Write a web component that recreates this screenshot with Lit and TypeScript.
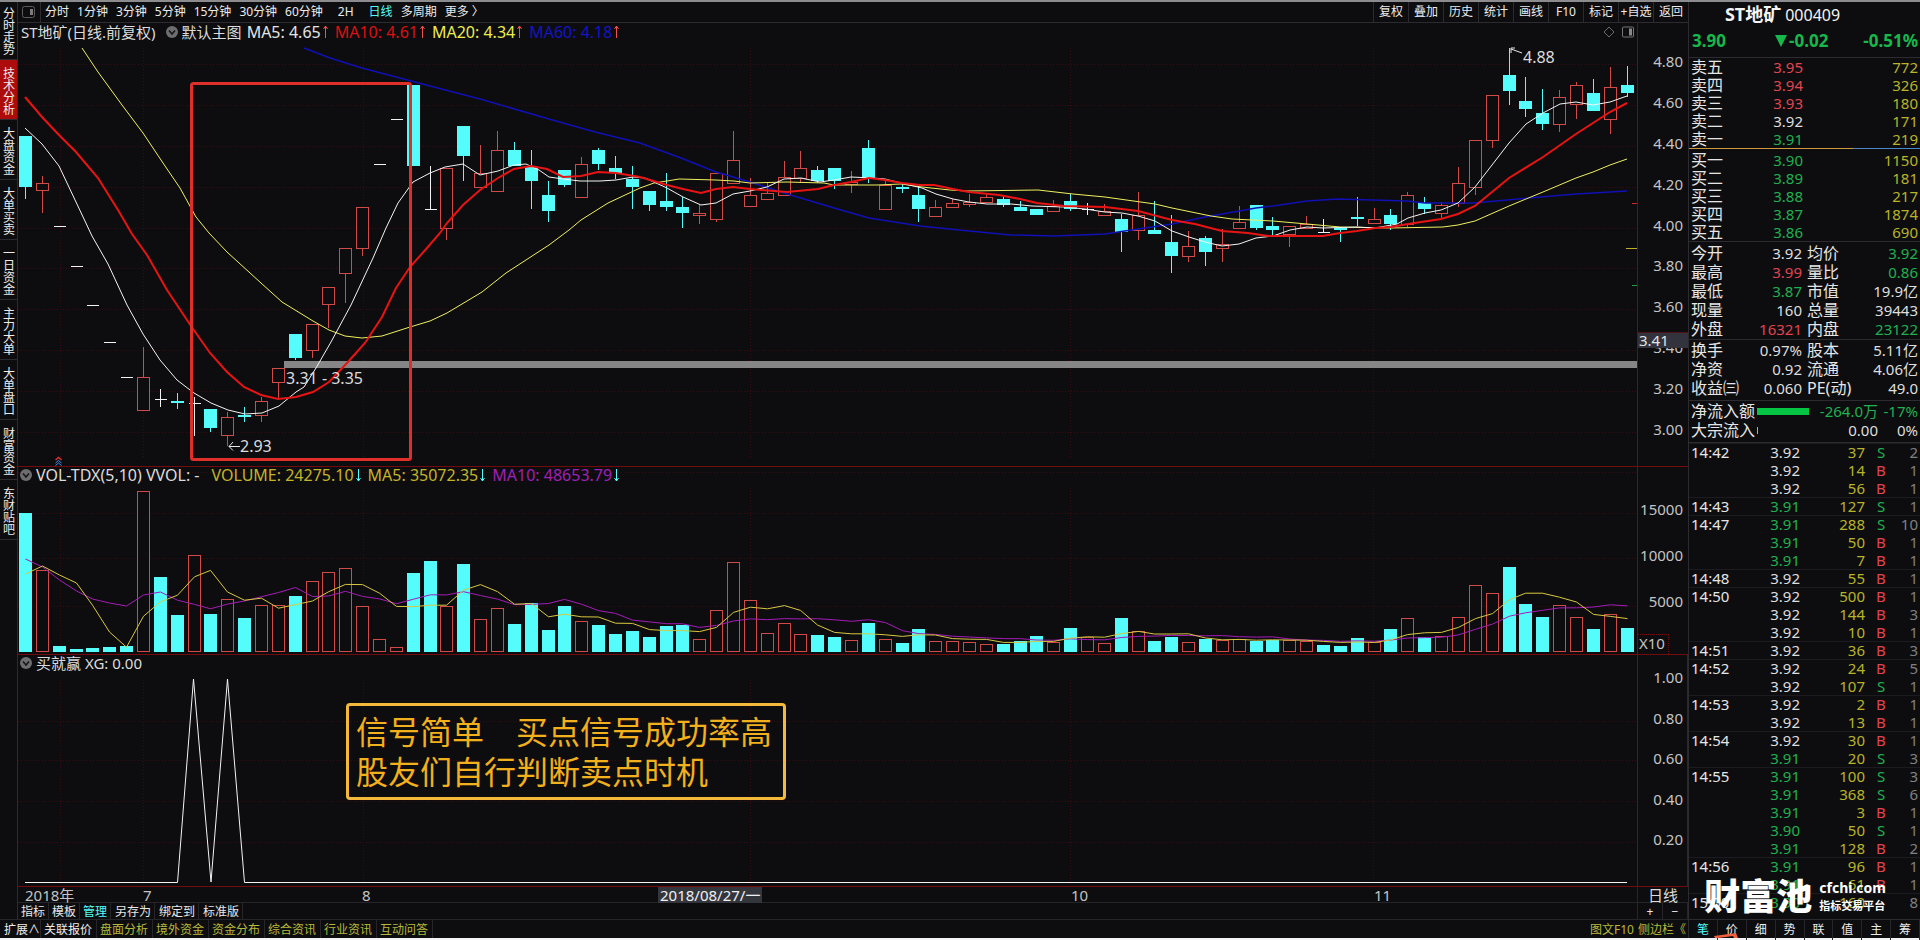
import { LitElement, html, svg, css, nothing } from "lit";
import { customElement, property } from "lit/decorators.js";
import { classMap } from "lit/directives/class-map.js";
import { styleMap } from "lit/directives/style-map.js";

// Plot geometry shared by the three panes.
const X0 = 18;
const PLOT_W = 1619;
const FIRST = 25.5;
const STEP = 16.858;
const PRICE_TOP = 23;
const PRICE_H = 443;
const VOL_TOP = 467;
const VOL_H = 187;
const VOL_BASE = 652;
const SIG_TOP = 655;
const SIG_H = 231;
const cx = (i: number) => Math.round(FIRST + i * STEP - 0.5) + 0.5;

type Kind = "c" | "r" | "w";
// kind, body top, body bottom, high, low
type Candle = [Kind, number, number, number, number];

const CANDLES: Candle[] = [
  ["c", 136, 187, 136, 199], ["r", 183, 190, 176, 213], ["w", 226, 226, 226, 226], ["w", 266, 266, 266, 266],
  ["w", 305, 305, 305, 305], ["w", 342, 342, 342, 342], ["w", 377, 377, 377, 377], ["r", 377, 410, 347, 410],
  ["w", 399, 399, 389, 407], ["c", 401, 403, 393, 409], ["w", 403, 403, 397, 436], ["c", 409, 428, 409, 432],
  ["r", 417, 435, 412, 446], ["c", 415, 417, 407, 422], ["r", 401, 415, 397, 422], ["r", 368, 382, 368, 400],
  ["c", 334, 358, 334, 360], ["r", 324, 350, 324, 358], ["r", 287, 304, 287, 328], ["r", 248, 273, 248, 303],
  ["r", 207, 248, 207, 256], ["w", 164, 164, 164, 164], ["w", 119, 119, 119, 119], ["c", 85, 166, 85, 166],
  ["w", 209, 209, 166, 209], ["r", 168, 228, 168, 240], ["c", 126, 156, 126, 181], ["r", 173, 187, 145, 187],
  ["r", 150, 191, 131, 191], ["c", 150, 166, 142, 166], ["c", 167, 181, 150, 209], ["c", 195, 211, 181, 222],
  ["c", 170, 185, 170, 187], ["r", 164, 197, 157, 197], ["c", 150, 164, 148, 170], ["c", 168, 173, 156, 179],
  ["c", 179, 187, 166, 209], ["c", 191, 205, 191, 211], ["c", 201, 207, 173, 211], ["c", 207, 213, 197, 228],
  ["r", 213, 215, 205, 224], ["r", 173, 219, 173, 222], ["r", 160, 183, 131, 183], ["r", 195, 206, 178, 206],
  ["r", 193, 199, 183, 199], ["r", 177, 195, 161, 195], ["r", 168, 178, 151, 183], ["c", 170, 181, 166, 183],
  ["c", 168, 181, 168, 189], ["r", 182, 184, 171, 193], ["c", 148, 178, 140, 183], ["r", 185, 209, 179, 209],
  ["c", 187, 189, 184, 193], ["c", 195, 209, 187, 222], ["r", 207, 216, 200, 216], ["r", 203, 207, 199, 207],
  ["r", 202, 204, 194, 207], ["r", 197, 202, 194, 202], ["c", 199, 205, 197, 207], ["c", 207, 211, 201, 211],
  ["c", 209, 215, 209, 215], ["r", 206, 211, 200, 211], ["c", 201, 209, 194, 211], ["w", 209, 209, 203, 215],
  ["r", 211, 215, 204, 215], ["c", 219, 232, 214, 252], ["r", 215, 230, 192, 240], ["c", 230, 234, 201, 234],
  ["c", 242, 256, 215, 273], ["r", 246, 256, 231, 262], ["c", 238, 252, 236, 266], ["r", 244, 248, 229, 262],
  ["r", 222, 228, 206, 228], ["c", 205, 228, 205, 230], ["c", 226, 230, 217, 237], ["r", 226, 234, 226, 247],
  ["r", 224, 228, 216, 228], ["w", 232, 232, 219, 233], ["c", 228, 230, 228, 242], ["c", 217, 219, 197, 226],
  ["r", 219, 223, 208, 223], ["c", 215, 224, 209, 230], ["r", 195, 224, 192, 227], ["c", 203, 209, 197, 214],
  ["r", 205, 213, 202, 218], ["r", 183, 203, 167, 207], ["r", 140, 187, 140, 195], ["r", 95, 140, 95, 148],
  ["c", 75, 91, 48, 105], ["c", 101, 109, 77, 117], ["c", 113, 124, 89, 130], ["r", 97, 124, 90, 132],
  ["r", 85, 104, 82, 119], ["c", 93, 111, 79, 111], ["r", 87, 119, 67, 134], ["c", 85, 93, 66, 97],
];

// Top edge of each volume bar; the bar stands on VOL_BASE.
const VOLUMES: number[] = [
  513, 570, 646, 649, 648, 647, 646, 491, 577, 615, 555, 614, 599, 618, 605, 605, 596, 581, 572, 568,
  606, 639, 647, 573, 561, 606, 564, 619, 608, 624, 603, 630, 606, 621, 625, 634, 631, 637, 626, 625,
  639, 610, 562, 600, 633, 623, 634, 635, 637, 640, 623, 639, 643, 629, 641, 641, 642, 644, 644, 641,
  636, 642, 628, 637, 643, 618, 631, 641, 637, 642, 639, 640, 639, 641, 640, 640, 641, 645, 646, 638,
  642, 629, 618, 637, 636, 617, 585, 593, 567, 604, 617, 605, 617, 629, 614, 628,
];
// Flat sessions whose volume bar is drawn solid.
const SOLID_FLAT = new Set([2, 3, 4, 5, 6, 8, 24, 77]);
const volumeIsCyan = (i: number) => SOLID_FLAT.has(i) || CANDLES[i][0] === "c";

const average = (n: number, head: number[]) =>
  VOLUMES.map((_, i) => {
    const y = i < head.length ? head[i] : VOLUMES.slice(i - n + 1, i + 1).reduce((a, b) => a + b, 0) / n;
    return `${cx(i)},${y.toFixed(1)}`;
  }).join(" ");
const VOL_MA5 = average(5, [574, 566, 575, 583]);
const VOL_MA10 = average(10, [559, 567, 580, 591, 599, 603, 606, 595, 592]);

const MA5 =
  "25,128 42,144 59,166 76,202 92,236 108,264 127,305 143,334 160,360 177,380 194,393 211,403 228,410 245,414 262,413 279,406 296,392 304,387 316,368 331,342 351,305 373,258 386,228 398,203 413,182 430,173 445,167 463,164 480,175 498,171 514,165 526,164 539,170 549,177 563,179 580,181 600,181 616,180 633,177 645,178 656,183 667,188 683,197 701,205 716,203 733,194 750,191 767,187 784,179 801,178 820,182 834,180 851,177 873,178 885,179 905,184 922,188 936,194 953,199 969,202 987,204 1011,204 1032,206 1064,207 1085,209 1105,212 1122,213 1138,216 1155,221 1172,231 1189,237 1205,242 1222,246 1239,244 1256,238 1273,236 1290,230 1307,227 1323,228 1357,227 1375,228 1397,224 1408,218 1425,213 1441,210 1458,203 1475,187 1492,165 1509,143 1526,124 1543,113 1560,104 1576,102 1593,105 1610,102 1627,96";
const MA10 =
  "25,97 42,117 59,135 76,152 98,178 118,210 132,234 147,255 167,290 191,326 210,353 227,372 244,387 261,395 278,399 296,397 313,392 329,382 347,363 365,343 382,317 396,288 410,267 427,248 440,233 447,223 463,205 480,190 498,178 514,169 531,166 547,169 563,177 581,176 598,172 616,173 640,177 667,185 683,189 701,193 716,189 733,187 750,189 787,192 818,189 834,185 851,182 869,178 885,180 902,183 920,185 934,185 953,189 969,192 999,195 1020,199 1037,203 1064,206 1105,207 1138,211 1172,220 1195,224 1222,231 1248,233 1268,236 1323,236 1340,233 1357,231 1375,228 1391,227 1408,224 1441,219 1458,214 1475,206 1492,192 1509,178 1543,157 1576,134 1610,112 1627,103";
const MA20 =
  "82,48 98,72 122,105 143,133 163,163 180,188 196,217 209,233 227,252 261,283 282,302 313,321 329,330 345,336 362,338 382,336 410,327 430,321 447,313 482,292 506,273 549,245 569,230 581,220 608,203 640,188 654,183 667,181 679,179 716,180 734,181 750,183 787,182 824,183 834,185 877,185 901,184 922,187 950,190 967,191 1038,190 1073,194 1105,197 1155,204 1172,208 1211,216 1232,219 1273,221 1307,224 1340,227 1390,228 1443,227 1458,225 1475,221 1509,206 1543,192 1576,178 1593,172 1610,165 1627,159";
const MA60 =
  "304,48 330,58 362,68 430,86 480,99 549,119 595,132 640,143 681,158 716,172 750,182 784,193 834,208 869,218 920,226 969,231 1011,235 1054,236 1105,234 1138,229 1172,224 1205,217 1256,208 1273,206 1307,201 1337,199 1373,200 1407,201 1425,203 1473,203 1507,200 1540,197 1576,194 1627,191";

const MONTH_LINES = [60, 143, 363, 750, 1070, 1373];

const left = (x: number) => `${((x - X0) / PLOT_W) * 100}%`;
const top = (y: number, from: number, h: number) => `${((y - from) / h) * 100}%`;

const sharedText = css`
  :host {
    font-family: "Noto Sans", "Noto Sans CJK SC", sans-serif;
  }
  button,
  a {
    appearance: none;
    margin: 0;
    padding: 0;
    border: 0;
    background: none;
    color: inherit;
    font: inherit;
    line-height: inherit;
    text-decoration: none;
    white-space: nowrap;
    cursor: pointer;
  }
`;

const grid = (ys: number[], y0: number, y1: number) => svg`
  ${ys.map((y) => svg`<line class="grid" x1="18" x2="1637" y1=${y + 0.5} y2=${y + 0.5}></line>`)}
  ${MONTH_LINES.map((x) => svg`<line class="grid" x1=${x + 0.5} x2=${x + 0.5} y1=${y0} y2=${y1}></line>`)}
`;

const collapse = html`<button class="collapse" aria-label="展开">
  <svg viewBox="0 0 12 12" width="12" height="12">
    <circle cx="6" cy="6" r="6" fill="#6d6d6d"></circle>
    <path d="M3 4.5 6 8l3-3.5" fill="none" stroke="#17171a" stroke-width="1.6"></path>
  </svg>
</button>`;

const arrow = (dir: "up" | "down") => html`<svg class="arrow ${dir}" viewBox="0 0 5 13" width="5" height="13">
  ${dir === "up"
    ? svg`<path d="M2.5 13V1M0.5 4 2.5 1l2 3" ></path>`
    : svg`<path d="M2.5 0v12M0.5 9l2 3 2-3"></path>`}
</svg>`;

@customElement("stock-charts")
class StockCharts extends LitElement {
  static styles = [
    sharedText,
    css`
      :host {
        display: flex;
        flex-direction: column;
        flex: 1;
        min-width: 0;
        font-size: 15px;
        line-height: 20px;
        color: #c4c4c4;
      }
      .pane {
        display: grid;
        grid-template-columns: minmax(0, 1fr) 51px;
        border-bottom: 1px solid #720a0e;
      }
      .price {
        flex: 443 0 443px;
      }
      .volume {
        flex: 187 0 187px;
      }
      .signal {
        flex: 231 0 231px;
      }
      .plot {
        position: relative;
        display: flex;
        flex-direction: column;
        min-width: 0;
      }
      .canvas {
        position: absolute;
        inset: 0;
        width: 100%;
        height: 100%;
      }
      .grid {
        stroke: #3a0b10;
        stroke-dasharray: 1 2;
      }
      .cyan {
        fill: #54fcfc;
        stroke: none;
      }
      .cyanline {
        stroke: #54fcfc;
      }
      .red {
        fill: #0d0d0f;
        stroke: #d04a48;
      }
      .redline {
        stroke: #d04a48;
      }
      .white {
        stroke: #f2f2f2;
      }
      .line {
        fill: none;
        stroke-width: 1;
      }
      .ma5 {
        stroke: #f4f4f4;
      }
      .ma10 {
        stroke: #e81414;
        stroke-width: 2;
      }
      .ma20 {
        stroke: #f0f060;
      }
      .ma60 {
        stroke: #1010b4;
        stroke-width: 1.5;
      }
      .vma5 {
        stroke: #d8c840;
      }
      .vma10 {
        stroke: #a41cb8;
      }
      .heading {
        position: relative;
        display: flex;
        align-items: center;
        height: 16px;
        padding-left: 2px;
        font-size: 16px;
        white-space: nowrap;
        color: #dcdcdc;
      }
      .price .heading {
        height: 17px;
        padding-left: 3px;
      }
      .collapse {
        display: flex;
        margin-right: 4px;
      }
      .price .collapse {
        margin-left: 10px;
      }
      .series {
        display: flex;
        align-items: center;
        gap: 2px;
        margin-right: 7px;
      }
      .name {
        margin-right: 12px;
      }
      .title,
      .main {
        font-size: 15px;
      }
      .main {
        margin-right: 5px;
      }
      .arrow {
        fill: none;
      }
      .up {
        stroke: #f05050;
      }
      .down {
        stroke: #54fcfc;
      }
      .s5 {
        color: #e4e4e4;
      }
      .s10 {
        color: #dc1010;
      }
      .s20 {
        color: #ecec50;
      }
      .s60 {
        color: #1414c8;
      }
      .v5 {
        color: #c4b428;
      }
      .v10 {
        color: #a020b8;
      }
      .tools {
        display: flex;
        gap: 7px;
        margin-left: auto;
        padding-right: 3px;
      }
      .tools button {
        display: flex;
      }
      .note {
        position: absolute;
        color: #dcdcdc;
        font-size: 16px;
        white-space: nowrap;
      }
      .callout {
        position: absolute;
        padding: 4px 11px 7px 7px;
        border: 3px solid #f4b93a;
        border-radius: 4px;
        color: #f2b01c;
        font-size: 32px;
        line-height: 40px;
        font-family: "Noto Sans CJK SC", sans-serif;
        white-space: pre;
      }
      .scale {
        position: relative;
        display: flex;
        flex-direction: column;
        justify-content: space-between;
        border-left: 1px solid #720a0e;
        padding-right: 5px;
        text-align: right;
      }
      .price .scale {
        padding-top: 28px;
        padding-bottom: 27px;
      }
      .volume .scale {
        padding-top: 32px;
        justify-content: flex-start;
      }
      .volume .scale span + span:not(.unit) {
        margin-top: 26px;
      }
      .signal .scale {
        padding-top: 12px;
        padding-bottom: 37px;
        border-right: 1px solid #720a0e;
        padding-right: 4px;
      }
      .volume .scale .unit {
        align-self: flex-start;
        margin-top: auto;
        padding: 0 3px 3px 1px;
        border-top: 1px dotted #720a0e;
        border-right: 1px dotted #720a0e;
        line-height: 16px;
      }
      .cursor {
        position: absolute;
        left: 0;
        right: 0;
        padding-left: 1px;
        border-top: 1px solid #501418;
        background: #33333d;
        color: #e4e4e4;
        text-align: left;
        line-height: 15px;
      }
      .dates {
        display: grid;
        grid-template-columns: minmax(0, 1fr) 51px;
        flex: none;
        height: 15px;
        line-height: 16px;
        border-bottom: 1px solid #26262a;
      }
      .track {
        position: relative;
      }
      .date {
        position: absolute;
        line-height: 16px;
      }
      .picked {
        padding: 0 2px;
        background: #34363e;
        color: #f0f0f0;
      }
      .period {
        text-align: center;
        border-left: 1px solid #26262a;
        color: #dcdcdc;
      }
      .tabs {
        display: flex;
        flex: none;
        height: 16px;
        line-height: 17px;
        font-size: 12px;
        color: #e8e8e8;
        border-bottom: 1px solid #26262a;
      }
      .tabs button {
        padding: 0 3px;
        border-right: 1px solid #26262a;
      }
      .tabs .on {
        color: #54fcfc;
      }
      .tabs .wide {
        padding: 0 3px 0 4px;
      }
      .zoom {
        display: grid;
        grid-template-columns: 1fr 1fr;
        width: 50px;
        margin-left: auto;
        border-left: 1px solid #26262a;
      }
      @media (max-width: 1100px) {
        .series:nth-child(n + 5) {
          display: none;
        }
      }
    `,
  ];

  private candle([kind, t, b, hi, lo]: Candle, i: number) {
    const x = cx(i);
    if (kind === "w")
      return svg`<g class="white" shape-rendering="crispEdges">
        <line x1=${x - 6} x2=${x + 6} y1=${t + 0.5} y2=${t + 0.5}></line>
        ${hi !== lo ? svg`<line x1=${x} x2=${x} y1=${hi} y2=${lo}></line>` : nothing}
      </g>`;
    if (kind === "c")
      return svg`<g shape-rendering="crispEdges">
        <line class="cyanline" x1=${x} x2=${x} y1=${hi} y2=${lo}></line>
        <rect class="cyan" x=${x - 6.5} y=${t} width="13" height=${b - t}></rect>
      </g>`;
    return svg`<g shape-rendering="crispEdges">
      <line class="redline" x1=${x} x2=${x} y1=${hi} y2=${lo}></line>
      <rect class="red" x=${x - 6} y=${t + 0.5} width="12" height=${b - t}></rect>
    </g>`;
  }

  private bar(t: number, i: number) {
    const x = cx(i);
    return volumeIsCyan(i)
      ? svg`<rect class="cyan" shape-rendering="crispEdges" x=${x - 6.5} y=${t} width="13" height=${VOL_BASE - t}></rect>`
      : svg`<rect class="red" shape-rendering="crispEdges" x=${x - 6} y=${t + 0.5} width="12" height=${VOL_BASE - 1 - t}></rect>`;
  }

  private series(cls: string, text: string, dir: "up" | "down") {
    return html`<span class="series ${cls}">${text}${arrow(dir)}</span>`;
  }

  private note(text: string, x: number, y: number) {
    return html`<span class="note" style=${styleMap({ left: left(x), top: top(y, PRICE_TOP, PRICE_H) })}>${text}</span>`;
  }

  render() {
    return html`
      <section class="pane price">
        <div class="plot">
          <svg class="canvas" viewBox="${X0} ${PRICE_TOP} ${PLOT_W} ${PRICE_H}" preserveAspectRatio="none">
            ${grid([64, 105, 146, 187, 228, 268, 309, 350, 391, 432], 48, 457)}
            <rect x="284" y="361" width="1353" height="7" fill="#868686"></rect>
            ${CANDLES.map((c, i) => this.candle(c, i))}
            <polyline class="line ma60" points=${MA60}></polyline>
            <polyline class="line ma20" points=${MA20}></polyline>
            <polyline class="line ma5" points=${MA5}></polyline>
            <polyline class="line ma10" points=${MA10}></polyline>
            <rect x="191.5" y="83.5" width="219" height="376" rx="2" fill="none" stroke="#de2f28" stroke-width="3"></rect>
            <path d="M240 446.500H229M233 442l-4 4.500 4 4M1522 53l-11-4M1511 53v-5h4" fill="none" stroke="#e8e8e8"></path>
            <path d="M55.500 460l3-2.500 3 2.500" fill="none" stroke="#e03030" stroke-width="1.500"></path>
            <path d="M55.500 463l3-2.500 3 2.500M55.500 465.500l3-2.500 3 2.500" fill="none" stroke="#3a90f0"></path>
            <path d="M1632 203.500h5" stroke="#d02828"></path>
            <path d="M1626 248.500h11" stroke="#c0b020"></path>
            <path d="M1632 285.500h5" stroke="#18a040"></path>
          </svg>
          <div class="heading">
            <span class="title">ST地矿(日线.前复权)</span>${collapse}<span class="main">默认主图</span>
            ${this.series("s5", "MA5: 4.65", "up")} ${this.series("s10", "MA10: 4.61", "up")}
            ${this.series("s20", "MA20: 4.34", "up")} ${this.series("s60", "MA60: 4.18", "up")}
            <span class="tools">
              <button aria-label="标注">
                <svg viewBox="0 0 12 12" width="12" height="12">
                  <path d="M6 1l5 5-5 5-5-5z" fill="none" stroke="#6a6a6a"></path>
                </svg>
              </button>
              <button aria-label="侧栏">
                <svg viewBox="0 0 12 12" width="12" height="12">
                  <rect x="0.500" y="1" width="11" height="10" rx="1" fill="none" stroke="#777"></rect>
                  <rect x="7" y="2.500" width="3" height="7" fill="#888"></rect>
                </svg>
              </button>
            </span>
          </div>
          ${this.note("4.88", 1523, 47)} ${this.note("2.93", 240, 436)} ${this.note("3.31 - 3.35", 286, 368)}
        </div>
        <div class="scale">
          ${["4.80", "4.60", "4.40", "4.20", "4.00", "3.80", "3.60", "3.40", "3.20", "3.00"].map((v) => html`<span>${v}</span>`)}
          <span class="cursor" style=${styleMap({ top: top(332, PRICE_TOP, PRICE_H) })}>3.41</span>
        </div>
      </section>

      <section class="pane volume">
        <div class="plot">
          <svg class="canvas" viewBox="${X0} ${VOL_TOP} ${PLOT_W} ${VOL_H}" preserveAspectRatio="none">
            ${grid([472, 513, 558, 606], 488, 652)} ${VOLUMES.map((v, i) => this.bar(v, i))}
            <polyline class="line vma10" points=${VOL_MA10}></polyline>
            <polyline class="line vma5" points=${VOL_MA5}></polyline>
          </svg>
          <div class="heading">
            ${collapse}<span class="name">VOL-TDX(5,10) VVOL: -</span>
            ${this.series("v5", "VOLUME: 24275.10", "down")} ${this.series("v5", "MA5: 35072.35", "down")}
            ${this.series("v10", "MA10: 48653.79", "down")}
          </div>
        </div>
        <div class="scale"><span>15000</span><span>10000</span><span>5000</span><span class="unit">X10</span></div>
      </section>

      <section class="pane signal">
        <div class="plot">
          <svg class="canvas" viewBox="${X0} ${SIG_TOP} ${PLOT_W} ${SIG_H}" preserveAspectRatio="none">
            ${grid([721, 760, 801, 842], 680, 883)}
            <polyline
              class="line ma5"
              points="25,882.500 177.500,882.500 193.500,679 211,882 227.500,679 244.500,882.500 1627,882.500"
            ></polyline>
          </svg>
          <div class="heading">${collapse}<span class="title">买就赢 XG: 0.00</span></div>
          <div class="callout" style=${styleMap({ left: left(346), top: top(703, SIG_TOP, SIG_H) })}>信号简单　买点信号成功率高
股友们自行判断卖点时机</div>
        </div>
        <div class="scale">${["1.00", "0.80", "0.60", "0.40", "0.20"].map((v) => html`<span>${v}</span>`)}</div>
      </section>

      <div class="dates">
        <div class="track">
          ${(
            [
              ["2018年", 25],
              ["7", 143],
              ["8", 362],
              ["2018/08/27/一", 658],
              ["10", 1071],
              ["11", 1374],
            ] as [string, number][]
          ).map(
            ([t, x]) =>
              html`<span class=${classMap({ date: true, picked: t.includes("/") })} style=${styleMap({ left: left(x) })}
                >${t}</span
              >`
          )}
        </div>
        <div class="period">日线</div>
      </div>

      <nav class="tabs">
        ${["指标", "模板", "管理"].map((t) => html`<button class=${t === "管理" ? "on" : ""}>${t}</button>`)}
        ${["另存为", "绑定到", "标准版"].map((t) => html`<button class="wide">${t}</button>`)}
        <span class="zoom"><button>+</button><button>−</button></span>
      </nav>
    `;
  }
}

const UP = "up";
const DN = "dn";
const PL = "pl";

@customElement("quote-panel")
class QuotePanel extends LitElement {
  @property({ attribute: false }) asks: [string, string, string, string][] = [
    ["卖五", "3.95", "772", UP],
    ["卖四", "3.94", "326", UP],
    ["卖三", "3.93", "180", UP],
    ["卖二", "3.92", "171", PL],
    ["卖一", "3.91", "219", DN],
  ];
  @property({ attribute: false }) bids: [string, string, string, string][] = [
    ["买一", "3.90", "1150", DN],
    ["买二", "3.89", "181", DN],
    ["买三", "3.88", "217", DN],
    ["买四", "3.87", "1874", DN],
    ["买五", "3.86", "690", DN],
  ];

  private stats = [
    ["今开", "3.92", PL, "均价", "3.92", DN],
    ["最高", "3.99", UP, "量比", "0.86", DN],
    ["最低", "3.87", DN, "市值", "19.9亿", PL],
    ["现量", "160", PL, "总量", "39443", PL],
    ["外盘", "16321", UP, "内盘", "23122", DN],
  ];
  private basics = [
    ["换手", "0.97%", PL, "股本", "5.11亿", PL],
    ["净资", "0.92", PL, "流通", "4.06亿", PL],
    ["收益㈢", "0.060", PL, "PE(动)", "49.0", PL],
  ];
  private ticks: [string, string, string, string, string][] = [
    ["14:42", "3.92", "37", "S", "2"], ["", "3.92", "14", "B", "1"], ["", "3.92", "56", "B", "1"],
    ["14:43", "3.91", "127", "S", "1"], ["14:47", "3.91", "288", "S", "10"], ["", "3.91", "50", "B", "1"],
    ["", "3.91", "7", "B", "1"], ["14:48", "3.92", "55", "B", "1"], ["14:50", "3.92", "500", "B", "1"],
    ["", "3.92", "144", "B", "3"], ["", "3.92", "10", "B", "1"], ["14:51", "3.92", "36", "B", "3"],
    ["14:52", "3.92", "24", "B", "5"], ["", "3.92", "107", "S", "1"], ["14:53", "3.92", "2", "B", "1"],
    ["", "3.92", "13", "B", "1"], ["14:54", "3.92", "30", "B", "1"], ["", "3.91", "20", "S", "3"],
    ["14:55", "3.91", "100", "S", "3"], ["", "3.91", "368", "S", "6"], ["", "3.91", "3", "B", "1"],
    ["", "3.90", "50", "S", "1"], ["", "3.91", "128", "B", "2"], ["14:56", "3.91", "96", "B", "1"],
    ["", "3.91", "61", "B", "1"], ["15:00", "3.90", "160", "", "8"],
  ];

  static styles = [
    sharedText,
    css`
      :host {
        position: relative;
        display: flex;
        flex-direction: column;
        width: 231px;
        flex: none;
        border-left: 1px solid #2c2c30;
        font-size: 15px;
        color: #dedede;
      }
      .title {
        display: flex;
        justify-content: center;
        align-items: baseline;
        gap: 4px;
        height: 25px;
        padding-right: 44px;
        line-height: 25px;
        font-size: 16px;
        color: #f4f4f4;
      }
      .title b {
        font-size: 18px;
      }
      .last {
        display: grid;
        grid-template-columns: 83px 1fr 1fr;
        height: 30px;
        padding: 0 2px 0 3px;
        line-height: 28px;
        font-size: 17px;
        font-weight: 700;
        color: #16b84c;
        border-bottom: 1px solid #2c2c30;
      }
      .last span {
        height: 28px;
      }
      .last span:last-child {
        text-align: right;
      }
      .change {
        display: flex;
        align-items: center;
        gap: 2px;
      }
      table {
        width: 100%;
        border-collapse: collapse;
        table-layout: fixed;
      }
      th,
      td {
        height: 18px;
        padding: 0;
        line-height: 18px;
        font-weight: 400;
        text-align: right;
        white-space: nowrap;
      }
      th {
        padding-left: 2px;
        font-size: 16px;
        text-align: left;
        color: #e6e6e6;
      }
      td:last-child {
        padding-right: 2px;
      }
      .label {
        width: 60px;
      }
      .price {
        width: 54px;
      }
      .size {
        color: #b8b428;
      }
      .up {
        color: #e04450;
      }
      .dn {
        color: #20b050;
      }
      .split {
        height: 1px;
        flex: none;
        background: linear-gradient(to right, #d09a3c 0 71%, #4a88c8 71%);
      }
      .bids,
      .stats {
        padding-top: 2px;
        border-bottom: 1px solid #2c2c30;
      }
      .stats th,
      .stats td {
        height: 19px;
        line-height: 19px;
      }
      .stats th + td + th {
        padding-left: 5px;
      }
      .basics {
        padding: 1px 0 2px;
      }
      .flow {
        padding: 1px 0 2px;
        border-bottom: 1px solid #2c2c30;
      }
      .flow div {
        display: grid;
        grid-template-columns: 64px 52px 1fr 38px;
        column-gap: 2px;
        align-items: center;
        height: 19px;
        padding: 0 2px;
        line-height: 19px;
        text-align: right;
        white-space: nowrap;
      }
      .flow .name {
        font-size: 16px;
        text-align: left;
        color: #e6e6e6;
      }
      .meter {
        height: 7px;
        background: #06c444;
      }
      .nil {
        width: 1px;
        height: 7px;
        background: #aaa;
      }
      .ticks {
        flex: 1;
      }
      .ticks th {
        font-size: 15px;
      }
      .ticks .timed th,
      .ticks .timed td {
        background: linear-gradient(#1c1c20, #1c1c20) top / 100% 1px no-repeat;
      }
      .side {
        text-align: center;
      }
      .count {
        color: #808080;
      }
      .modes {
        display: grid;
        grid-template-columns: repeat(8, 1fr);
        height: 18px;
        border-top: 1px solid #2c2c30;
        font-size: 12px;
        line-height: 20px;
        color: #ececec;
      }
      .modes button {
        border-right: 1px solid #26262a;
      }
      .modes .on {
        color: #54fcfc;
      }
      .brand {
        position: absolute;
        right: 34px;
        bottom: 23px;
        display: flex;
        align-items: flex-end;
        gap: 7px;
        color: #fff;
        font-weight: 700;
        white-space: nowrap;
      }
      .mark {
        font-family: "Noto Sans CJK SC", sans-serif;
        font-size: 36px;
        line-height: 42px;
        font-weight: 900;
      }
      .words {
        display: flex;
        flex-direction: column;
        font-size: 11px;
        line-height: 18px;
      }
      .site {
        font-size: 14px;
        line-height: 18px;
      }
      .stamp {
        position: absolute;
        left: 25px;
        bottom: 0;
      }
    `,
  ];

  private book(rows: [string, string, string, string][]) {
    return html`<table>
      <colgroup>
        <col class="label" />
        <col class="price" />
        <col />
      </colgroup>
      <tbody>
        ${rows.map(
          ([n, p, v, c]) => html`<tr>
            <th scope="row">${n}</th>
            <td class=${c}>${p}</td>
            <td class="size">${v}</td>
          </tr>`
        )}
      </tbody>
    </table>`;
  }

  private pairs(rows: string[][]) {
    return html`<table>
      <colgroup>
        <col style="width:50px" />
        <col style="width:63px" />
        <col style="width:54px" />
        <col />
      </colgroup>
      <tbody>
        ${rows.map(
          ([a, b, bc, c, d, dc]) => html`<tr>
            <th scope="row">${a}</th>
            <td class=${bc}>${b}</td>
            <th scope="row">${c}</th>
            <td class=${dc}>${d}</td>
          </tr>`
        )}
      </tbody>
    </table>`;
  }

  render() {
    return html`
      <div class="title"><b>ST地矿</b><span>000409</span></div>
      <div class="last">
        <span>3.90</span>
        <span class="change"
          ><svg viewBox="0 0 12 12" width="12" height="12"><path d="M0 0h12L6 12z" fill="#16b84c"></path></svg>-0.02</span
        >
        <span>-0.51%</span>
      </div>
      <div>${this.book(this.asks)}</div>
      <div class="split"></div>
      <div class="bids">${this.book(this.bids)}</div>
      <div class="stats">${this.pairs(this.stats)}</div>
      <div class="stats basics">${this.pairs(this.basics)}</div>
      <div class="flow">
        <div><span class="name">净流入额</span><span class="meter"></span><span class="dn">-264.0万</span><span class="dn">-17%</span></div>
        <div><span class="name">大宗流入</span><span class="nil"></span><span>0.00</span><span>0%</span></div>
      </div>
      <div class="ticks">
        <table>
          <colgroup>
            <col style="width:60px" />
            <col style="width:51px" />
            <col style="width:65px" />
            <col style="width:32px" />
            <col />
          </colgroup>
          <tbody>
            ${this.ticks.map(
              ([t, p, v, s, n]) => html`<tr class=${t ? "timed" : ""}>
                <th scope="row">${t}</th>
                <td class=${p === "3.92" ? "" : "dn"}>${p}</td>
                <td class="size">${v}</td>
                <td class="side ${s === "S" ? "dn" : "up"}">${s}</td>
                <td class="count">${n}</td>
              </tr>`
            )}
          </tbody>
        </table>
      </div>
      <nav class="modes">
        ${["笔", "价", "细", "势", "联", "值", "主", "筹"].map(
          (t, i) => html`<button class=${i === 0 ? "on" : ""}>${t}</button>`
        )}
      </nav>
      <div class="brand">
        <span class="mark">财富池</span>
        <span class="words"><span class="site">cfchi.com</span><span>指标交易平台</span></span>
      </div>
      <svg class="stamp" viewBox="0 0 24 5" width="24" height="5">
        <path d="M0 3 22 0l2 5h-4l-1-2-15 2H1z" fill="#f0603c"></path>
      </svg>
    `;
  }
}

@customElement("app-root")
class AppRoot extends LitElement {
  static styles = [
    sharedText,
    css`
      :host {
        display: flex;
        box-sizing: border-box;
        min-height: 100vh;
        border-top: 2px solid #8c8c8e;
        border-bottom: 2px solid #f4f4f4;
        background: #0d0d0f;
      }
      .work {
        display: flex;
        flex-direction: column;
        flex: 1;
        min-width: 0;
      }
      .upper {
        display: flex;
        flex: 1;
        min-width: 0;
      }
      .rail {
        display: flex;
        flex-direction: column;
        width: 17px;
        flex: none;
        border-right: 1px solid #2c2c30;
        border-bottom: 1px solid #26262a;
      }
      .rail button {
        box-sizing: border-box;
        width: 17px;
        height: 60px;
        padding: 8px 2px 3px 3px;
        border-bottom: 1px solid #2c2c30;
        color: #ececec;
        font-size: 12px;
        line-height: 12px;
        white-space: normal;
        word-break: break-all;
      }
      .rail button:first-child {
        height: 58px;
        padding-top: 6px;
      }
      .rail .on {
        background: #ac0c0c;
      }
      .center {
        display: flex;
        flex-direction: column;
        flex: 1;
        min-width: 0;
      }
      .bar {
        display: flex;
        height: 20px;
        flex: none;
        border-bottom: 1px solid #2c2c30;
        font-size: 12px;
        line-height: 20px;
        color: #ececec;
      }
      .layout {
        display: flex;
        align-items: center;
        padding: 0 5px 0 4px;
        border-right: 1px solid #2c2c30;
      }
      .periods {
        display: flex;
        overflow: hidden;
      }
      .periods button {
        padding: 0 4px;
      }
      .periods .loose {
        padding: 0 11px;
      }
      .periods .on {
        color: #54fcfc;
      }
      .actions {
        display: flex;
        margin-left: auto;
      }
      .actions button {
        box-sizing: border-box;
        width: 35px;
        border-left: 1px solid #2c2c30;
      }
      .foot {
        display: flex;
        height: 18px;
        flex: none;
        font-size: 12px;
        line-height: 20px;
        color: #ececec;
      }
      .foot a {
        padding: 0 4px 0 3px;
        border-right: 1px solid #26262a;
      }
      .foot .gold {
        color: #b8b83c;
      }
      .foot .first {
        padding: 0 0 0 4px;
      }
      .foot .push {
        margin-left: auto;
        border: 0;
        padding: 0;
      }
      .foot .last {
        border: 0;
        padding: 0 2px 0 4px;
      }
    `,
  ];

  render() {
    const rail = ["分时走势", "技术分析", "大盘资金", "大单买卖", "一日资金", "主力大单", "大单盘口", "财富资金", "东财贴吧"];
    const periods = ["分时", "1分钟", "3分钟", "5分钟", "15分钟", "30分钟", "60分钟", "2H", "日线", "多周期", "更多 〉"];
    const actions = ["复权", "叠加", "历史", "统计", "画线", "F10", "标记", "+自选", "返回"];
    const links = ["盘面分析", "境外资金", "资金分布", "综合资讯", "行业资讯", "互动问答"];
    return html`
      <div class="work">
        <div class="upper">
          <nav class="rail">${rail.map((t) => html`<button class=${t === "技术分析" ? "on" : ""}>${t}</button>`)}</nav>
          <main class="center">
            <div class="bar">
              <button class="layout" aria-label="布局">
                <svg viewBox="0 0 13 12" width="13" height="12">
                  <rect x="0.500" y="0.500" width="12" height="11" rx="2" fill="none" stroke="#5c5c5c"></rect>
                  <rect x="8" y="3" width="3" height="6" fill="#7c7c7c"></rect>
                </svg>
              </button>
              <nav class="periods">
                ${periods.map(
                  (t) => html`<button class=${classMap({ on: t === "日线", loose: t === "2H" })}>${t}</button>`
                )}
              </nav>
              <div class="actions">${actions.map((t) => html`<button>${t}</button>`)}</div>
            </div>
            <stock-charts></stock-charts>
          </main>
        </div>
        <footer class="foot">
          <a href="#" class="first">扩展∧</a>
          <a href="#">关联报价</a>
          ${links.map((t) => html`<a href="#" class="gold">${t}</a>`)}
          <a href="#" class="gold push">图文F10</a>
          <a href="#" class="gold last">侧边栏《</a>
        </footer>
      </div>
      <quote-panel></quote-panel>
    `;
  }
}
